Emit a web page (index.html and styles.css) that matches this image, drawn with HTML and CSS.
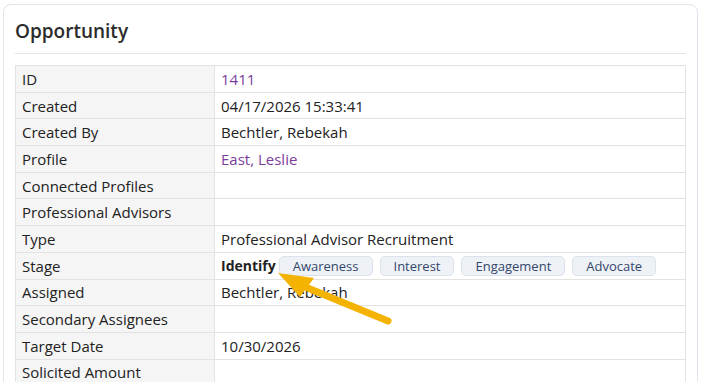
FILE: index.html
```html
<!DOCTYPE html>
<html lang="en">
<head>
    <meta charset="UTF-8">
    <title>Opportunity</title>
    <link rel="stylesheet" href="styles.css">
</head>
<body>
    <div class="card">
        <h2 class="card-title">Opportunity</h2>
        <table class="details">
            <tr><th>ID</th><td><a href="#">1411</a></td></tr>
            <tr><th>Created</th><td>04/17/2026 15:33:41</td></tr>
            <tr><th>Created By</th><td>Bechtler, Rebekah</td></tr>
            <tr><th>Profile</th><td><a href="#">East, Leslie</a></td></tr>
            <tr><th>Connected Profiles</th><td></td></tr>
            <tr><th>Professional Advisors</th><td></td></tr>
            <tr><th>Type</th><td>Professional Advisor Recruitment</td></tr>
            <tr>
                <th>Stage</th>
                <td class="stage-cell">
                    <div class="stages">
                        <strong>Identify</strong>
                        <button class="stage">Awareness</button>
                        <button class="stage">Interest</button>
                        <button class="stage">Engagement</button>
                        <button class="stage">Advocate</button>
                    </div>
                </td>
            </tr>
            <tr><th>Assigned</th><td>Bechtler, Rebekah</td></tr>
            <tr><th>Secondary Assignees</th><td></td></tr>
            <tr><th>Target Date</th><td>10/30/2026</td></tr>
            <tr><th>Solicited Amount</th><td></td></tr>
        </table>
    </div>

    <svg class="pointer" width="705" height="382" viewBox="0 0 705 382">
        <line x1="388" y1="321" x2="298" y2="284" stroke="#f5b301" stroke-width="7" stroke-linecap="round"/>
        <polygon points="278,273 314,278 300,297" fill="#f5b301"/>
    </svg>
</body>
</html>
```

FILE: styles.css
```css
body {
    margin: 0;
    padding: 4px 7px 0 3px;
    font-family: "Open Sans", "Noto Sans", sans-serif;
    font-size: 15px;
    color: #222;
    background: #fff;
    overflow: hidden;
    height: 382px;
    box-sizing: border-box;
}
.card {
    border: 1px solid #dfe5ec;
    border-radius: 8px;
    padding: 0 11px 20px 11px;
    height: 420px;
}
.card-title {
    margin: 0;
    padding: 13px 0 9px 0;
    font-size: 19px;
    font-weight: 600;
    color: #2b2b2b;
    border-bottom: 1px solid #e1e6ee;
}
.details {
    width: 100%;
    margin-top: 11px;
    border-collapse: collapse;
}
.details th,
.details td {
    height: 25.7px;
    padding: 0 6px;
    border: 1px solid #e3e3e3;
    text-align: left;
    font-weight: normal;
    line-height: 18px;
}
.details th {
    width: 186px;
    background: #f5f5f5;
}
.details a {
    color: #7b3d9b;
    text-decoration: none;
}
.stages {
    display: flex;
    align-items: center;
    gap: 7px;
}
.stages strong {
    font-size: 14px;
    font-weight: 700;
    margin-right: -4px;
}
.stage {
    font-family: inherit;
    font-size: 13px;
    height: 20px;
    padding: 0 13px;
    line-height: 18px;
    color: #34466b;
    background: #eef2f7;
    border: 1px solid #dbe2ec;
    border-radius: 5px;
}
.pointer {
    position: absolute;
    left: 0;
    top: 0;
    pointer-events: none;
}
```
